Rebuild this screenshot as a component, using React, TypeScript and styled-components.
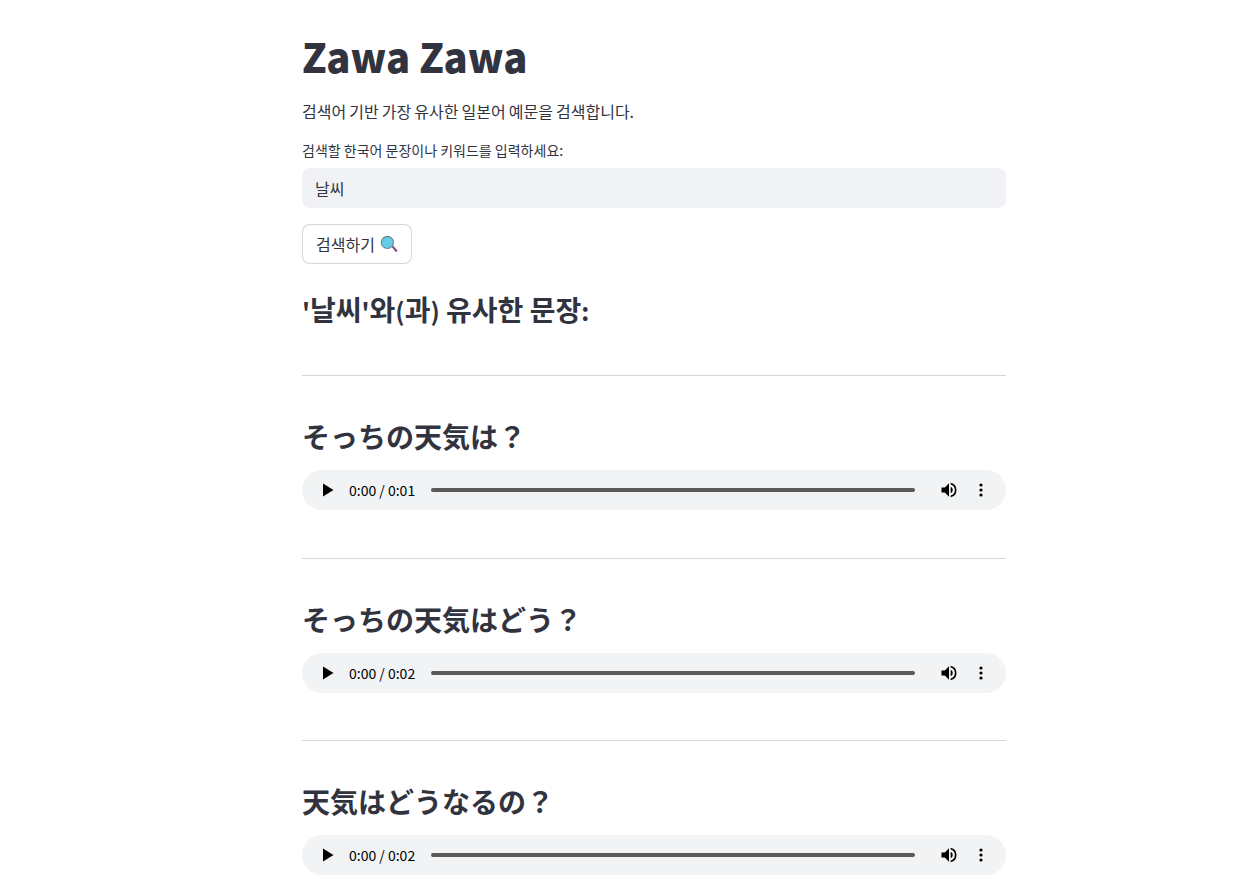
import * as React from 'react';
import styled, { createGlobalStyle } from 'styled-components';

const GlobalStyle = createGlobalStyle`
	html, body {
		margin: 0;
		padding: 0;
		background: #ffffff;
		overflow: hidden;
	}
	body {
		font-family: "Noto Sans CJK KR", "Noto Sans", sans-serif;
		color: rgb(49, 51, 63);
	}
`;

const results = [
	{ text: 'そっちの天気は？', time: '0:00 / 0:01' },
	{ text: 'そっちの天気はどう？', time: '0:00 / 0:02' },
	{ text: '天気はどうなるの？', time: '0:00 / 0:02' },
];

const App: React.FC = () => {
	return (
		<Page>
			<GlobalStyle />
			<Main>
				<Title>Zawa Zawa</Title>
				<Description>검색어 기반 가장 유사한 일본어 예문을 검색합니다.</Description>
				<FieldLabel>검색할 한국어 문장이나 키워드를 입력하세요:</FieldLabel>
				<SearchInput defaultValue="날씨" />
				<SearchButton>
					검색하기
					<EmojiIcon viewBox="0 0 18 18">
						<path d="M11.6 11.8l1.4-1.2 4 4.4c.5.6.4 1.2-.1 1.6-.5.4-1.1.4-1.6-.1z" fill="#7d4a8c" />
						<circle cx="7.4" cy="7.4" r="6.6" fill="#6f7f8c" />
						<circle cx="7.4" cy="7.4" r="5.5" fill="#63cde8" />
					</EmojiIcon>
				</SearchButton>
				<ResultTitle>
					<Latin>'</Latin>날씨<Latin>'</Latin>와<Latin>(</Latin>과<Latin>)</Latin> 유사한 문장<Latin>:</Latin>
				</ResultTitle>
				{results.map((item) => (
					<ResultItem key={item.text}>
						<Divider />
						<SentenceTitle>{item.text}</SentenceTitle>
						<AudioBar>
							<PlayIcon viewBox="0 0 12 14">
								<path d="M1 0.5v13l10.5-6.5z" fill="#000000" />
							</PlayIcon>
							<AudioTime>{item.time}</AudioTime>
							<AudioTrack />
							<VolumeIcon viewBox="0 0 24 24">
								<path
									d="M3 9v6h4l5 5V4L7 9H3zm13.5 3A4.5 4.5 0 0 0 14 7.97v8.05A4.5 4.5 0 0 0 16.5 12zM14 3.23v2.06a7 7 0 0 1 0 13.42v2.06a9 9 0 0 0 0-17.54z"
									fill="#000000"
								/>
							</VolumeIcon>
							<MoreIcon viewBox="0 0 4 14">
								<circle cx="2" cy="2" r="1.6" fill="#000000" />
								<circle cx="2" cy="7" r="1.6" fill="#000000" />
								<circle cx="2" cy="12" r="1.6" fill="#000000" />
							</MoreIcon>
						</AudioBar>
					</ResultItem>
				))}
			</Main>
		</Page>
	);
};

const Page = styled.div`
	height: 879px;
	overflow: hidden;
	padding-left: 302px;
`;

const Main = styled.main`
	width: 704px;
	display: flex;
	flex-direction: column;
	& > * {
		flex-shrink: 0;
	}
`;

const Title = styled.h1`
	margin: 0;
	padding-top: 28px;
	font-size: 40px;
	line-height: 57px;
	font-weight: 900;
`;

const Description = styled.p`
	margin: 0;
	padding-top: 12px;
	font-size: 16px;
	line-height: 28px;
	word-spacing: -0.5px;
`;

const FieldLabel = styled.label`
	display: block;
	padding-top: 15px;
	font-size: 14px;
	line-height: 20px;
`;

const SearchInput = styled.input`
	display: block;
	box-sizing: border-box;
	width: 100%;
	height: 40px;
	margin-top: 8px;
	padding: 0 13px;
	border: 0;
	border-radius: 8px;
	outline: none;
	background: rgb(240, 242, 246);
	font-family: inherit;
	font-size: 16px;
	color: rgb(49, 51, 63);
`;

const SearchButton = styled.button`
	align-self: flex-start;
	box-sizing: border-box;
	display: flex;
	align-items: center;
	gap: 5px;
	height: 40px;
	margin-top: 16px;
	padding: 0 13px;
	border: 1px solid rgba(49, 51, 63, 0.2);
	border-radius: 8px;
	background: #ffffff;
	font-family: inherit;
	font-size: 16px;
	color: rgb(49, 51, 63);
`;

const EmojiIcon = styled.svg`
	width: 18px;
	height: 18px;
`;

const ResultTitle = styled.h3`
	margin: 0;
	padding-top: 24px;
	font-size: 28px;
	line-height: 42px;
	font-weight: 700;
`;

const Latin = styled.span`
	font-size: 0.88em;
`;

const ResultItem = styled.section`
	display: flex;
	flex-direction: column;
	height: 182.5px;
	&:first-of-type {
		margin-top: 44px;
	}
`;

const Divider = styled.hr`
	width: 100%;
	margin: 0;
	border: 0;
	border-top: 1px solid rgba(49, 51, 63, 0.2);
`;

const SentenceTitle = styled.h3`
	margin: 0;
	padding-top: 39px;
	font-size: 28px;
	line-height: 42px;
	font-weight: 700;
	font-family: "Noto Sans CJK JP", sans-serif;
`;

const AudioBar = styled.div`
	display: flex;
	align-items: center;
	height: 40px;
	margin-top: 13px;
	padding: 0 20px;
	border-radius: 20px;
	background: #f1f3f4;
`;

const PlayIcon = styled.svg`
	width: 12px;
	height: 14px;
	flex: none;
`;

const AudioTime = styled.span`
	margin-left: 15px;
	font-size: 14px;
	color: #000000;
	white-space: nowrap;
`;

const AudioTrack = styled.div`
	flex: 1;
	height: 4px;
	margin: 0 24px 0 16px;
	border-radius: 2px;
	background: #595959;
`;

const VolumeIcon = styled.svg`
	width: 20px;
	height: 20px;
	flex: none;
`;

const MoreIcon = styled.svg`
	width: 4px;
	height: 14px;
	flex: none;
	margin: 0 3px 0 20px;
`;

export default App;
